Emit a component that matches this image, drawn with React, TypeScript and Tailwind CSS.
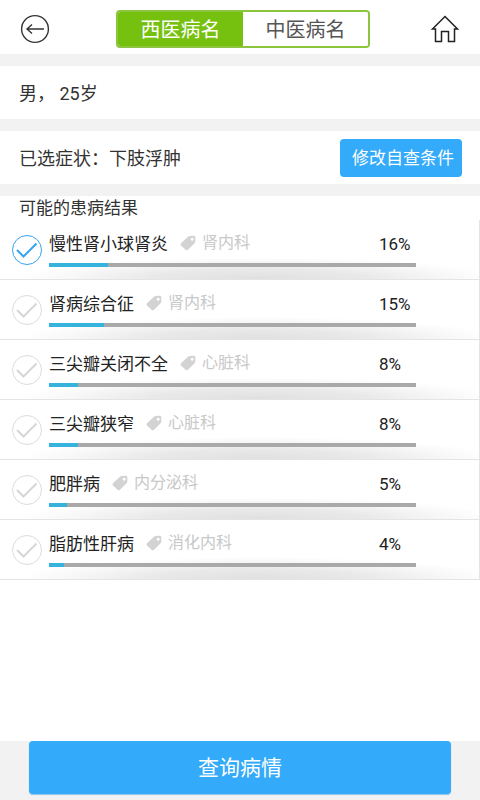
import React, { useState } from 'react';
import clsx from 'clsx';

interface Disease {
  name: string;
  department: string;
  percent: number;
}

const diseases: Disease[] = [
  { name: '慢性肾小球肾炎', department: '肾内科', percent: 16 },
  { name: '肾病综合征', department: '肾内科', percent: 15 },
  { name: '三尖瓣关闭不全', department: '心脏科', percent: 8 },
  { name: '三尖瓣狭窄', department: '心脏科', percent: 8 },
  { name: '肥胖病', department: '内分泌科', percent: 5 },
  { name: '脂肪性肝病', department: '消化内科', percent: 4 },
];

const tabs = ['西医病名', '中医病名'];

const BackIcon = () => (
  <svg viewBox="0 0 30 30" className="size-[30px]" fill="none" stroke="#333" strokeWidth="1.4">
    <circle cx="15" cy="15" r="13.4" />
    <path d="M24 15H7M12 10.5L7 15l5 4.5" />
  </svg>
);

const HomeIcon = () => (
  <svg viewBox="0 0 30 30" className="size-[30px]" fill="none" stroke="#222" strokeWidth="1.5">
    <path d="M15 2.5L27.5 15H24.5v12.5h-6v-10h-7v10h-6V15H2.5z" />
  </svg>
);

const TagIcon = () => (
  <svg viewBox="0 0 16 16" className="size-4" fill="#d3d3d3">
    <path
      fillRule="evenodd"
      d="M8.2 1.6Q8.8 1 9.8 1L13.8 .8Q15.4 .8 15.4 2.4L15.3 6.6Q15.2 7.6 14.5 8.3L8 14.7Q6.8 15.8 5.6 14.7L.9 10.4Q0 9.3 1 8.3zM12.2 2.8a1.5 1.5 0 1 0 .01 0z"
    />
  </svg>
);

const DiseaseRow: React.FC<{
  disease: Disease;
  checked: boolean;
  onSelect: () => void;
}> = ({ disease, checked, onSelect }) => (
  <li className="flex h-[60px] border-r border-b border-[#e4e4e4] bg-[radial-gradient(ellipse_50%_22px_at_54%_100%,#e0e0e0_0%,#e9e9e9_45%,#f8f8f8_80%,#ffffff_100%)] pl-3">
    <label className="mt-[15px] grid size-[30px] shrink-0">
      <input
        type="checkbox"
        aria-label={disease.name}
        checked={checked}
        onChange={onSelect}
        className="col-start-1 row-start-1 size-[30px] appearance-none rounded-full border border-[#dcdcdc] checked:border-[#36a3f0]"
      />
      <svg
        viewBox="0 0 30 30"
        fill="none"
        strokeWidth="2"
        className={clsx(
          'pointer-events-none col-start-1 row-start-1 size-[30px]',
          checked ? 'stroke-[#36a3f0]' : 'stroke-[#d6d6d6]'
        )}
      >
        <path d="M5 15l6.5 6.5L24.5 8.5" />
      </svg>
    </label>
    <div className="ml-[7px] flex-1 pr-[63px]">
      <div className="flex h-[43px] items-center pt-1.5">
        <span className="text-[17px] text-[#222]">{disease.name}</span>
        <span className="ml-3 flex items-center gap-1.5 pb-1 text-base text-[#c8c8c8]">
          <TagIcon />
          {disease.department}
        </span>
        <span className="ml-auto w-[37px] text-[17px] text-[#222]">{disease.percent}%</span>
      </div>
      <div className="h-1 bg-[#a9a9a9]">
        <div className="h-full bg-[#36b3dc]" style={{ width: `${disease.percent}%` }} />
      </div>
    </div>
  </li>
);

export default function App() {
  const [tab, setTab] = useState(0);
  const [selected, setSelected] = useState(0);

  return (
    <div className="flex min-h-screen flex-col bg-white font-[Roboto,'Noto_Sans_CJK_SC',sans-serif] text-[#333]">
      <header className="flex h-[54px] items-center justify-between px-5 pt-1">
        <button aria-label="返回">
          <BackIcon />
        </button>
        <div className="ml-1.5 flex h-[38px] w-[254px] overflow-hidden rounded border-2 border-[#8cc63f]">
          {tabs.map((label, i) => (
            <button
              key={label}
              onClick={() => setTab(i)}
              className={clsx(
                'flex-1 pt-0.5 text-xl',
                tab === i ? 'bg-[#76c10f] text-white' : 'bg-white text-[#555]'
              )}
            >
              {label}
            </button>
          ))}
        </div>
        <button aria-label="首页">
          <HomeIcon />
        </button>
      </header>

      <section className="flex h-[77px] items-center border-y-12 border-[#f2f2f2] px-[19px] pt-0.5 text-lg">
        男， 25岁
      </section>

      <section className="flex h-[65px] items-center justify-between border-b-12 border-[#f2f2f2] pr-[18px] pl-[19px] text-lg">
        <p className="pt-0.5">已选症状：下肢浮肿</p>
        <button className="h-[38px] w-[122px] rounded-sm bg-[#33aafa] pt-0.5 pl-1 text-[17px] text-white">
          修改自查条件
        </button>
      </section>

      <main className="flex-1">
        <h2 className="h-6 px-[19px] text-[17px] leading-6">可能的患病结果</h2>
        <ul>
          {diseases.map((disease, i) => (
            <DiseaseRow
              key={disease.name}
              disease={disease}
              checked={selected === i}
              onSelect={() => setSelected(i)}
            />
          ))}
        </ul>
      </main>

      <footer className="bg-[#f2f2f2] px-[29px] pb-1.5">
        <button className="h-[53px] w-full rounded-sm bg-[#33aafa] pt-0.5 text-[21px] text-white shadow-[0_1px_1px_#8cc4ea]">
          查询病情
        </button>
      </footer>
    </div>
  );
}
